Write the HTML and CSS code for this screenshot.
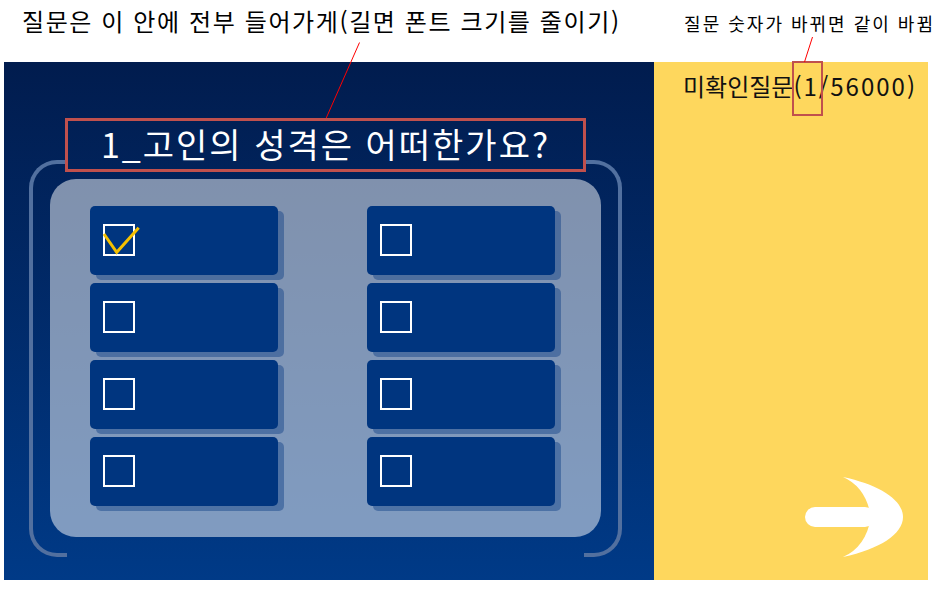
FILE: index.html
```html
<!DOCTYPE html>
<html lang="ko">

<head>
    <title>미확인질문</title>
    <meta charset="UTF-8">
    <meta name="viewport" content="width=device-width, initial-scale=1.0">
    <link rel="stylesheet" href="styles.css">
</head>

<body>
    <div class="notes">
        <p class="note note-main">질문은 이 안에 전부 들어가게(길면 폰트 크기를 줄이기)</p>
        <p class="note note-count">질문 숫자가 바뀌면 같이 바뀜</p>
    </div>

    <div class="screen">
        <section class="stage">
            <h1 class="question">1_고인의 성격은 어떠한가요?</h1>
            <div class="frame">
                <div class="panel">
                    <div class="options">
                        <div class="option">
                            <span class="box">
                                <svg class="check" width="40" height="34" viewBox="0 0 40 34">
                                    <polyline points="1,10 13.7,28.3 35.7,3.7" />
                                </svg>
                            </span>
                        </div>
                        <div class="option"><span class="box"></span></div>
                        <div class="option"><span class="box"></span></div>
                        <div class="option"><span class="box"></span></div>
                        <div class="option"><span class="box"></span></div>
                        <div class="option"><span class="box"></span></div>
                        <div class="option"><span class="box"></span></div>
                        <div class="option"><span class="box"></span></div>
                    </div>
                </div>
            </div>
        </section>

        <aside class="side">
            <p class="progress">미확인질문<span class="count">(<span class="current">1</span>/56000)</span></p>
            <svg class="next" width="98" height="80" viewBox="0 0 98 80">
                <rect x="0" y="30" width="70" height="20" rx="10" />
                <path d="M38 0 C75 8 98 23 98 40 C98 57 75 72 38 80 Q61 70 66 40 Q61 10 38 0 Z" />
            </svg>
        </aside>
    </div>

    <!-- annotation leaders -->
    <svg class="leaders" width="944" height="599" viewBox="0 0 944 599">
        <line x1="359.5" y1="42.5" x2="326" y2="118.5" />
        <line x1="812.5" y1="37" x2="804.5" y2="62" />
    </svg>
</body>

</html>
```

FILE: styles.css
```css
:root {
    --navy-top: #011c4e;
    --navy-bottom: #003a87;
    --option: #00357f;
    --yellow: #fed75d;
    --note-red: #c0504d;
}

body {
    position: relative;
    margin: 0;
    background: #ffffff;
    font-family: "Noto Sans CJK KR", "Noto Sans", sans-serif;
    color: #000000;
}

.notes {
    display: flex;
    align-items: flex-start;
    height: 62px;
    padding: 0 9px 0 22px;
}

.note {
    margin: 0;
    line-height: 1.2;
    white-space: nowrap;
}

.note-main {
    padding-top: 7px;
    font-size: 24px;
    letter-spacing: 1.6px;
}

.note-count {
    margin-left: auto;
    padding-top: 13px;
    font-size: 18px;
    letter-spacing: 2px;
}

.screen {
    display: flex;
    height: 518px;
    padding-left: 4px;
}

.stage {
    width: 650px;
    box-sizing: border-box;
    padding: 56px 0 0 25px;
    background: linear-gradient(var(--navy-top), var(--navy-bottom));
}

.question {
    position: relative;
    z-index: 1;
    box-sizing: border-box;
    width: 521px;
    height: 54px;
    margin: 0 0 0 36px;
    border: 3px solid var(--note-red);
    color: #ffffff;
    font-size: 34px;
    font-weight: 400;
    line-height: 46px;
    letter-spacing: 2px;
    text-align: center;
    white-space: nowrap;
}

.frame {
    position: relative;
    box-sizing: border-box;
    width: 593px;
    height: 397px;
    margin-top: -12px;
    padding: 19px 21px 20px;
}

.frame::before,
.frame::after {
    content: "";
    position: absolute;
    top: 0;
    bottom: 0;
    width: 38px;
    box-sizing: border-box;
    border: 4px solid #52709f;
}

.frame::before {
    left: 0;
    border-right: 0;
    border-radius: 28px 0 0 28px;
}

.frame::after {
    right: 0;
    border-left: 0;
    border-radius: 0 28px 28px 0;
}

.panel {
    height: 358px;
    box-sizing: border-box;
    padding: 27px 0 0 40px;
    background: rgba(255, 255, 255, 0.5);
    border-radius: 26px;
}

.options {
    display: grid;
    grid-template-columns: 188px 188px;
    grid-auto-rows: 69px;
    column-gap: 89px;
    row-gap: 8px;
}

.option {
    box-sizing: border-box;
    padding: 18px 0 0 13px;
    border-radius: 5px;
    background: var(--option);
    box-shadow: 6px 5px 0 rgba(0, 53, 127, 0.4);
    cursor: pointer;
}

.box {
    position: relative;
    display: block;
    width: 32px;
    height: 32px;
    box-sizing: border-box;
    border: 2px solid #ffffff;
}

.check {
    position: absolute;
    left: -2px;
    top: -2px;
    overflow: visible;
}

.check polyline {
    fill: none;
    stroke: #f5c000;
    stroke-width: 3;
}

.side {
    display: flex;
    flex-direction: column;
    width: 274px;
    box-sizing: border-box;
    padding: 10px 0 0 29px;
    background: var(--yellow);
}

.progress {
    margin: 0;
    font-size: 24px;
    line-height: 1.2;
    color: #111111;
    white-space: nowrap;
}

.count {
    letter-spacing: 2px;
}

.current {
    position: relative;
}

.current::after {
    content: "";
    position: absolute;
    left: -12px;
    right: -4px;
    top: -7px;
    height: 55px;
    box-sizing: border-box;
    border: 2px solid var(--note-red);
}

.next {
    align-self: flex-end;
    margin: auto 25px 23px 0;
    fill: #ffffff;
}

.leaders {
    position: absolute;
    left: 0;
    top: 0;
    pointer-events: none;
}

.leaders line {
    stroke: #ff0000;
    stroke-width: 1;
}
```
